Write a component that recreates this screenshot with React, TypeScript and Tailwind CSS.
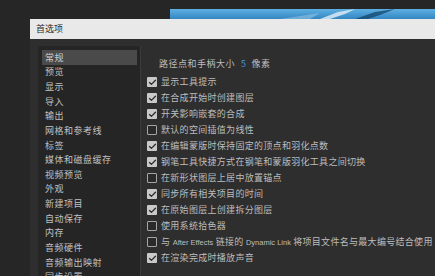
import { Check } from 'lucide-react';
import type { ReactNode } from 'react';

const sections = [
  '常规',
  '预览',
  '显示',
  '导入',
  '输出',
  '网格和参考线',
  '标签',
  '媒体和磁盘缓存',
  '视频预览',
  '外观',
  '新建项目',
  '自动保存',
  '内存',
  '音频硬件',
  '音频输出映射',
  '同步设置',
];

const Latin = ({ children }: { children: ReactNode }) => (
  <span className="text-[7.5px] tracking-normal" style={{ fontFamily: '"Liberation Sans", Arial, sans-serif' }}>
    {children}
  </span>
);

const options: { label: ReactNode; checked: boolean }[] = [
  { label: '显示工具提示', checked: true },
  { label: '在合成开始时创建图层', checked: true },
  { label: '开关影响嵌套的合成', checked: true },
  { label: '默认的空间插值为线性', checked: false },
  { label: '在编辑蒙版时保持固定的顶点和羽化点数', checked: true },
  { label: '钢笔工具快捷方式在钢笔和蒙版羽化工具之间切换', checked: true },
  { label: '在新形状图层上居中放置锚点', checked: false },
  { label: '同步所有相关项目的时间', checked: true },
  { label: '在原始图层上创建拆分图层', checked: true },
  { label: '使用系统拾色器', checked: false },
  {
    label: (
      <>
        与 <Latin>After Effects</Latin> 链接的 <Latin>Dynamic Link</Latin> 将项目文件名与最大编号结合使用
      </>
    ),
    checked: false,
  },
  { label: '在渲染完成时播放声音', checked: true },
];

function Banner() {
  return (
    <div className="relative flex-1 h-[10px] bg-gradient-to-b from-[#5db0e2] to-[#3486c2] overflow-hidden">
      <svg className="absolute inset-0" width="265" height="10" viewBox="0 0 265 10">
        <path d="M150 10 L168 3 L185 0 L175 5 L160 10 Z" fill="#dbeaf5" opacity="0.85" />
        <path d="M185 10 L205 3 L225 0 L210 6 L198 10 Z" fill="#0f3f66" opacity="0.7" />
        <path d="M110 10 L150 4 L140 10 Z" fill="#9fcbe8" opacity="0.5" />
      </svg>
    </div>
  );
}

function Checkbox({ checked }: { checked: boolean }) {
  if (checked) {
    return (
      <div className="size-[10px] shrink-0 rounded-[1px] bg-[#c9c9c9] flex items-center justify-center">
        <Check className="size-[9px] text-[#2c2c2c]" strokeWidth={3.5} />
      </div>
    );
  }
  return <div className="size-[10px] shrink-0 rounded-[1px] border border-[#a5a5a5] bg-[#2a2a2a]" />;
}

export default function App() {
  return (
    <div
      className="w-[435px] h-[276px] bg-[#262626] overflow-hidden flex flex-col"
      style={{ fontFamily: '"Noto Sans CJK SC", "Noto Sans", sans-serif' }}
    >
      {/* splash behind the dialog */}
      <div className="h-[19px] shrink-0 flex pl-[170px] pt-[9px]">
        <Banner />
      </div>

      <div className="ml-[30px] flex-1 flex flex-col min-h-0">
        {/* Title bar */}
        <div className="h-[20px] shrink-0 bg-[#e9e9e9] flex items-center pl-[6px] text-[9px] text-[#2a2a2a]">
          首选项
        </div>

        {/* Body */}
        <div className="flex-1 bg-[#2e2e2e] flex min-h-0">
          <div className="ml-[8px] mt-[7px] w-[103px] shrink-0 bg-[#252525] border-r border-[#3b3b3b] pt-[4px] pl-[4px] pr-[3px]">
            {sections.map((s, i) => (
              <div
                key={s}
                className={
                  'h-[14.67px] flex items-center pl-[3px] text-[9px] tracking-[0.5px] ' +
                  (i === 0 ? 'bg-[#4a4a4a] text-[#cfcfcf]' : 'text-[#c2c2c2]')
                }
              >
                {s}
              </div>
            ))}
          </div>

          <div className="flex-1 pl-[6px] pt-[17px] min-w-0">
            <div className="h-[16px] flex items-center pl-[12px] text-[9px] text-[#bdbdbd] whitespace-nowrap tracking-[0.5px]">
              路径点和手柄大小
              <span className="ml-[6px] text-[#4c97dc]">5</span>
              <span className="ml-[5px]">像素</span>
            </div>
            <div className="mt-[2px]">
              {options.map((o, i) => (
                <div key={i} className="h-[16px] flex items-center gap-[4px]">
                  <Checkbox checked={o.checked} />
                  <span className="text-[9px] tracking-[0.3px] text-[#bdbdbd] whitespace-nowrap">{o.label}</span>
                </div>
              ))}
            </div>
          </div>
        </div>
      </div>
    </div>
  );
}
